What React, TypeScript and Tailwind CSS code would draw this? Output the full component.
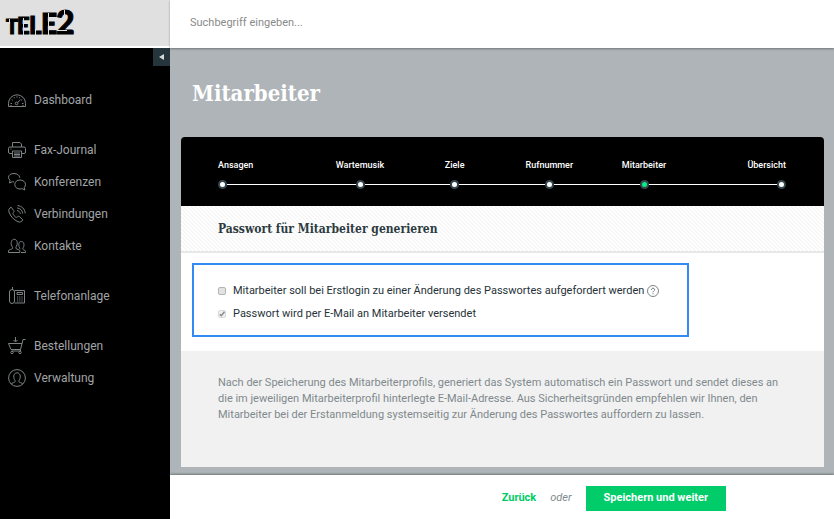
import { ReactNode, useState } from 'react';

interface NavItem {
  label: string;
  icon: ReactNode;
}

const navGroups: NavItem[][] = [
  [
    {
      label: 'Dashboard',
      icon: (
        <>
          <path d="M.5 15.5v-3.200a8.500 8.500 0 0 1 17 0v3.200z" />
          <path d="M2.500 12.500H4M14 12.500h1.500M3.700 8.500l1.100.8M6 6.200l.6 1.100M9 5.300v1.300M11.800 6.200l-.5 1.100M14.200 8.500l-1.100.8M3 15v-1M15 15v-1" />
          <path d="M12.500 8.800L9.600 11.500" />
          <circle cx="8.600" cy="12.400" r="1.300" />
        </>
      ),
    },
  ],
  [
    {
      label: 'Fax-Journal',
      icon: (
        <>
          <path d="M4.500 6V1.500h7.500l1.500 1.500v3" />
          <path d="M4.500 12.500H2A1.500 1.500 0 0 1 .5 11V7.500A1.500 1.500 0 0 1 2 6h14a1.500 1.500 0 0 1 1.500 1.500V11a1.500 1.500 0 0 1-1.500 1.500h-2.500" />
          <path d="M2.500 8h1M4.500 10h9v6.500h-9zM6 12h6M6 13.500h6M6 15h6" />
        </>
      ),
    },
    {
      label: 'Konferenzen',
      icon: (
        <>
          <path d="M6 9c-.5 0-1-.1-1.500-.3L1.500 10 2 7.200A4.500 4 0 0 1 .5 4.300C.5 2 3 .5 6 .5s5.500 1.500 5.800 4.200" />
          <path d="M12 7c-3 0-5.200 1.900-5.200 4.500S9 16 12 16c.8 0 1.500-.1 2.100-.4l2.700 1.400-.5-2.600c.7-.8 1.200-1.800 1.200-2.900C17.500 8.900 15 7 12 7z" />
        </>
      ),
    },
    {
      label: 'Verbindungen',
      icon: (
        <>
          <path d="M3.200 2.200C1 3.200.3 4.800 1 7c1.300 4 5 8.200 9 9.700 2 .8 3.700.3 4.800-1.800l-3.300-3.300c-.6-.5-1.500-.4-2 .2-.5.700-1.300.7-1.900.2-1.200-.9-1.900-1.800-2.500-2.800-.4-.7-.2-1.300.3-1.700.7-.5.8-1.200.3-1.900z" />
          <path d="M9 5.500c1.800.2 3 1.400 3.300 3.300M9.200 3c3.100.3 5.200 2.400 5.500 5.500M9.500.6c4.400.4 7.300 3.300 7.700 7.700" />
        </>
      ),
    },
    {
      label: 'Kontakte',
      icon: (
        <>
          <path d="M.5 15.500v-1.800c0-1 3.300-1.400 4-2.200.4-.5 0-1.500-.7-2.500-.8-1.500-.8-3.500-.3-4.700C4 3 5 2.300 6.200 2.300s2.300.7 2.800 2c.5 1.200.3 3.200-.4 4.700-.6 1-1 2-.6 2.500.7.800 3.800 1.200 3.800 2.200v1.800z" />
          <path d="M13 15.500h4.500v-1.300c0-1-2.400-1.200-2.700-2-.2-.5.200-1 .6-1.800.6-1.200.8-3 .3-4.200C15.200 5 14.300 4.500 13.300 4.500s-1.900.5-2.300 1.700c-.5 1.200-.2 3 .4 4.200.4.800.6 1.300.4 1.800" />
        </>
      ),
    },
  ],
  [
    {
      label: 'Telefonanlage',
      icon: (
        <>
          <path d="M4.500 2.500V0" />
          <rect x="1.500" y="2.500" width="5" height="14" rx="2.500" />
          <path d="M6.500 3.500h10v12.500h-10M9 5.500h5.500v2H9z" />
          <path d="M9 10h1.200M11.200 10h1.200M13.400 10h1.200M9 12h1.200M11.200 12h1.200M13.400 12h1.200M9 14h1.200M11.200 14h1.200M13.400 14h1.200" />
        </>
      ),
    },
  ],
  [
    {
      label: 'Bestellungen',
      icon: (
        <>
          <path d="M7.500 0v4.500M5.500 3l2 2 2-2" />
          <path d="M17.500 2.500h-2.500L12.500 12.500H3L.5 6.500h13.500" />
          <path d="M12.500 12.500v1.500H3.500" />
          <circle cx="4" cy="15.500" r="1.200" />
          <circle cx="12" cy="15.500" r="1.200" />
        </>
      ),
    },
    {
      label: 'Verwaltung',
      icon: (
        <>
          <circle cx="9" cy="9" r="8.400" />
          <path d="M3.500 15c.3-1.500 3.300-1.300 3.700-2.300.2-.6-.2-1.200-.7-2-.8-1.500-1-3.700-.4-5C6.600 4.500 7.700 3.800 9 3.800s2.400.7 2.900 1.900c.6 1.300.4 3.500-.4 5-.5.800-.9 1.400-.7 2 .4 1 3.400.8 3.700 2.300" />
        </>
      ),
    },
  ],
];

const steps = ['Ansagen', 'Wartemusik', 'Ziele', 'Rufnummer', 'Mitarbeiter', 'Übersicht'];
const activeStep = 4;

function Logo() {
  return (
    <svg width="80" height="46" viewBox="0 0 80 46" role="img" aria-label="TELE2">
      <g fill="#000" stroke="#000" strokeWidth="1" fontWeight="900" fontFamily="Lato, sans-serif">
        <text x="6" y="34" fontSize="20">T</text>
        <text x="17" y="34" fontSize="22">E</text>
        <text x="29" y="34" fontSize="24">L</text>
        <text x="41" y="34" fontSize="28">E</text>
        <text x="56" y="34" fontSize="32">2</text>
      </g>
      {/* stencil cuts */}
      <path d="M9.500 19v5M23.500 18v17M35.500 29v6M48.500 13v22M64.500 10v7M57 30.500h10" stroke="#e0e0e0" strokeWidth="1" />
    </svg>
  );
}

function Sidebar() {
  return (
    <aside className="flex w-[170px] shrink-0 flex-col bg-black">
      <a href="#" className="block h-12 border-b-2 border-white bg-[#e0e0e0]">
        <Logo />
      </a>
      <button
        type="button"
        aria-label="Menü einklappen"
        className="flex h-[18px] w-[17px] items-center justify-center self-end bg-[#26353b]"
      >
        <svg width="5" height="6" viewBox="0 0 5 6" fill="#d5d9db">
          <path d="M5 0v6L0 3z" />
        </svg>
      </button>
      <nav className="flex flex-col gap-[18px] pt-[18px]">
        {navGroups.map((group) => (
          <ul key={group[0].label}>
            {group.map((item) => (
              <li key={item.label}>
                <a href="#" className="flex h-8 items-center gap-2 pl-2 text-[12px] text-[#a0a5a7]">
                  <svg width="18" height="18" viewBox="0 0 18 18" fill="none" stroke="#7d8385" strokeWidth="1">
                    {item.icon}
                  </svg>
                  {item.label}
                </a>
              </li>
            ))}
          </ul>
        ))}
      </nav>
    </aside>
  );
}

function Stepper() {
  return (
    <ol className="grid grid-cols-6 rounded-t bg-black pt-[22px] pr-[38px] pb-[17px] pl-[37px] text-[9px] leading-3 font-medium text-white">
      {steps.map((step, i) => {
        const first = i === 0;
        const last = i === steps.length - 1;
        return (
          <li key={step} aria-current={i === activeStep ? 'step' : undefined}>
            <div className={first ? 'text-left' : last ? 'text-right' : 'text-center'}>{step}</div>
            <div className="mt-[9px] flex items-center">
              {!first && <span className="h-px flex-1 bg-white" />}
              <span
                className={
                  i === activeStep
                    ? 'size-[9px] rounded-full border-2 border-[#37474f] bg-[#00f082]'
                    : 'size-[9px] rounded-full border-2 border-[#37474f] bg-white'
                }
              />
              {!last && <span className="h-px flex-1 bg-white" />}
            </div>
          </li>
        );
      })}
    </ol>
  );
}

export default function App() {
  const [changePassword, setChangePassword] = useState(false);

  return (
    <div className="flex min-h-screen font-[Roboto,sans-serif]">
      <Sidebar />
      <div className="flex min-w-0 flex-1 flex-col bg-[#aeb4b7]">
        <header className="flex h-12 items-center bg-white px-5 pb-0.5 shadow-[0_1px_2px_rgba(0,0,0,0.35)]">
          <input
            type="search"
            aria-label="Suchbegriff"
            placeholder="Suchbegriff eingeben..."
            className="w-full text-[11px] text-[#37474f] outline-none placeholder:text-[#8a8a8a]"
          />
        </header>

        <main className="flex flex-1 flex-col pr-[10px] pb-2 pl-[11px]">
          <h1 className="px-[11px] pt-[29px] pb-7 font-['DejaVu_Serif_Condensed','DejaVu_Serif',serif] text-[22px] leading-8 font-bold text-white">
            Mitarbeiter
          </h1>

          <section className="flex flex-1 flex-col">
            <Stepper />
            <h2 className="border-b-2 border-[#e6e8e8] bg-white bg-[linear-gradient(45deg,#f7f7f7_25%,transparent_25%,transparent_50%,#f7f7f7_50%,#f7f7f7_75%,transparent_75%)] bg-[length:4px_4px] px-[37px] pt-[13px] pb-3 font-['DejaVu_Serif_Condensed','DejaVu_Serif',serif] text-[12px] leading-5 font-bold text-[#2c3b41]">
              Passwort für Mitarbeiter generieren
            </h2>
            <div className="bg-white px-[11px] pt-[10px] pb-[14px]">
              <div className="flex w-fit flex-col gap-[7px] border-2 border-[#338af3] pt-[18px] pr-7 pb-[13px] pl-6 text-[11px] leading-4 text-[#263238]">
                <div className="flex items-center gap-[7px]">
                  <input
                    id="change-password"
                    type="checkbox"
                    checked={changePassword}
                    onChange={(e) => setChangePassword(e.target.checked)}
                    className="size-2 appearance-none rounded-xs border border-[#b5b5b5] bg-[#e2e2e2] checked:bg-[#777]"
                  />
                  <label htmlFor="change-password">
                    Mitarbeiter soll bei Erstlogin zu einer Änderung des Passwortes aufgefordert werden
                  </label>
                  <button type="button" aria-label="Hilfe" className="-ml-1">
                    <svg width="12" height="12" viewBox="0 0 12 12" fill="none" stroke="#5c666a">
                      <circle cx="6" cy="6" r="5.500" strokeWidth=".8" />
                      <path d="M4.400 4.800c0-2.200 3.200-2 3.200-.1C7.600 5.900 6 5.900 6 7.300M6 8.300v1" strokeWidth=".9" />
                    </svg>
                  </button>
                </div>
                <div className="flex items-center gap-[7px]">
                  <span className="grid">
                    <input
                      id="send-mail"
                      type="checkbox"
                      checked
                      disabled
                      className="col-start-1 row-start-1 size-2 appearance-none rounded-xs border border-[#d8d8d8] bg-[#f0f0f0]"
                    />
                    <svg className="z-10 col-start-1 row-start-1" width="8" height="8" viewBox="0 0 8 8" fill="none" stroke="#8a8a8a" strokeWidth="1.500">
                      <path d="M1.800 4.200l1.500 1.500L6.500 1.800" />
                    </svg>
                  </span>
                  <label htmlFor="send-mail">Passwort wird per E-Mail an Mitarbeiter versendet</label>
                </div>
              </div>
            </div>
            <div className="flex-1 bg-[#f1f1f1] px-[37px] py-6">
              <p className="text-[11px] leading-4 text-[#7f898d]">
                Nach der Speicherung des Mitarbeiterprofils, generiert das System automatisch ein Passwort und sendet dieses an
                die im jeweiligen Mitarbeiterprofil hinterlegte E-Mail-Adresse. Aus Sicherheitsgründen empfehlen wir Ihnen, den
                Mitarbeiter bei der Erstanmeldung systemseitig zur Änderung des Passwortes auffordern zu lassen.
              </p>
            </div>
          </section>
        </main>

        <footer className="flex h-11 items-center justify-end gap-[14px] bg-white pt-1 pr-[108px] pb-[1px] text-[11px] shadow-[0_-1px_2px_rgba(0,0,0,0.35)]">
          <a href="#" className="font-bold text-[#00cc66]">Zurück</a>
          <span className="text-[#7f898d] italic">oder</span>
          <button type="button" className="h-[25px] bg-[#00cc6a] px-[18px] font-bold text-white">
            Speichern und weiter
          </button>
        </footer>
      </div>
    </div>
  );
}
